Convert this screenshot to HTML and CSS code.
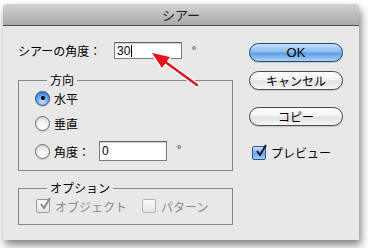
FILE: index.html
```html
<!DOCTYPE html>
<html lang="ja">
<head>
    <meta charset="UTF-8">
    <title>シアー</title>
    <link rel="stylesheet" href="styles.css">
</head>
<body>
    <div class="dialog">
        <div class="titlebar">シアー</div>

        <div class="content">
            <div class="main">
                <div class="angle-row">
                    <span class="lbl">シアーの角度：</span>
                    <span class="field">30<span class="caret"></span></span>
                    <span class="deg">°</span>
                </div>

                <fieldset class="group dir">
                    <legend>方向</legend>
                    <div class="opt-row r1"><span class="radio on"></span>水平</div>
                    <div class="opt-row r2"><span class="radio"></span>垂直</div>
                    <div class="opt-row r3">
                        <span class="radio"></span>
                        <span class="lbl2">角度：</span>
                        <span class="field small">0</span>
                        <span class="deg small-deg">°</span>
                    </div>
                </fieldset>

                <fieldset class="group options">
                    <legend>オプション</legend>
                    <div class="check-row">
                        <span class="check checked"><svg viewBox="0 0 14 14"><path d="M3 7 L6 11 L12 1" /></svg></span>
                        <span class="dis">オブジェクト</span>
                        <span class="check second"></span>
                        <span class="dis">パターン</span>
                    </div>
                </fieldset>
            </div>

            <div class="side">
                <div class="btn ok">OK</div>
                <div class="btn cancel">キャンセル</div>
                <div class="btn copy">コピー</div>
                <div class="preview">
                    <span class="check blue"><svg viewBox="0 0 14 14"><path d="M3 7 L6 11 L12 1" /></svg></span>
                    プレビュー
                </div>
            </div>
        </div>
    </div>

    <!-- red arrow pointing at the angle field -->
    <svg class="arrow" width="368" height="248" viewBox="0 0 368 248">
        <line x1="197" y1="85" x2="164" y2="61" stroke="#fff" stroke-width="5" stroke-linecap="round"/>
        <polygon points="152,53 170,57 162,68" fill="#fff" stroke="#fff" stroke-width="3" stroke-linejoin="round"/>
        <line x1="197" y1="85" x2="164" y2="61" stroke="#e3121b" stroke-width="2.5" stroke-linecap="round"/>
        <polygon points="152,53 170,57 162,68" fill="#e3121b"/>
    </svg>
</body>
</html>
```

FILE: styles.css
```css
body {
    margin: 0;
    background: #fff;
    font-family: "Noto Sans CJK JP", "DejaVu Sans", sans-serif;
    font-size: 12px;
    color: #000;
    width: 368px;
    height: 248px;
    overflow: hidden;
    position: relative;
}

.dialog {
    margin: 4px 0 0 3px;
    width: 356px;
    height: 236px;
    background: #e8e8e8;
    border-radius: 4px 4px 0 0;
    box-shadow: 2px 5px 9px rgba(0, 0, 0, 0.5);
}

.titlebar {
    height: 21px;
    line-height: 21px;
    text-align: center;
    font-size: 13px;
    color: #1e1e1e;
    background: linear-gradient(#d2d2d2, #a9a9a9);
    border-bottom: 1px solid #4e4e4e;
    border-radius: 4px 4px 0 0;
}

.content {
    display: flex;
    padding-left: 15px;
}

.main {
    width: 215px;
}

.angle-row {
    display: flex;
    align-items: center;
    margin-top: 16px;
    height: 17px;
}

.lbl {
    width: 96px;
}

.field {
    display: inline-flex;
    align-items: center;
    box-sizing: border-box;
    width: 68px;
    height: 17px;
    background: #fff;
    border: 1px solid #7d7d7d;
    border-top-color: #5e5e5e;
    box-shadow: inset 0 1px 1px rgba(0, 0, 0, 0.2);
    padding-left: 2px;
    font-family: "Liberation Sans", "DejaVu Sans", sans-serif;
    font-size: 12px;
}

.caret {
    display: inline-block;
    width: 1px;
    height: 12px;
    background: #000;
    margin-left: 1px;
}

.deg {
    align-self: flex-start;
    margin-left: 10px;
    margin-top: 0;
    font-size: 11px;
}

.group {
    margin: 0;
    border: 1px solid #868686;
    padding: 0 0 0 17px;
    box-sizing: border-box;
}

.group legend {
    padding: 0 3px;
    margin-left: 11px;
    line-height: 14px;
    font-size: 12px;
}

.dir {
    margin-top: 14px;
    height: 98px;
}

.opt-row {
    display: flex;
    align-items: center;
    height: 18px;
}

.r1 {
    margin-top: 2px;
}

.r2 {
    margin-top: 7px;
}

.r3 {
    margin-top: 9px;
    height: 20px;
}

.radio {
    width: 15px;
    height: 15px;
    box-sizing: border-box;
    border-radius: 50%;
    border: 1px solid #6e6e6e;
    background: radial-gradient(circle at 50% 72%, #ffffff, #ececec 55%, #c4c4c4);
    box-shadow: 0 1px 1px rgba(0, 0, 0, 0.15);
    margin-left: -1px;
    margin-right: 4px;
    position: relative;
}

.radio.on {
    border-color: #2c4f86;
    background: radial-gradient(circle at 50% 75%, #c2e2ff, #5d9fe8 55%, #2a62b6);
}

.radio.on::after {
    content: "";
    position: absolute;
    left: 4.5px;
    top: 4.5px;
    width: 4px;
    height: 4px;
    border-radius: 50%;
    background: #000;
}

.lbl2 {
    width: 45px;
}

.field.small {
    width: 68px;
    height: 20px;
}

.small-deg {
    margin-left: 10px;
    margin-top: 0;
}

.options {
    margin-top: 10px;
    height: 44px;
}

.check-row {
    display: flex;
    align-items: center;
    height: 14px;
    margin-top: 4px;
}

.check {
    width: 14px;
    height: 14px;
    box-sizing: border-box;
    border: 1px solid #9a9a9a;
    border-radius: 2px;
    background: linear-gradient(#fafafa, #e4e4e4);
    margin-right: 5px;
    position: relative;
}

.check svg {
    position: absolute;
    left: 1px;
    top: -3px;
    width: 14px;
    height: 14px;
}

.check path {
    fill: none;
    stroke: #8c8c8c;
    stroke-width: 2;
}

.check.second {
    margin-left: 15px;
    border-color: #b4b4b4;
}

.dis {
    color: #8a8a8a;
}

.side {
    margin-left: 16px;
    width: 94px;
}

.btn {
    box-sizing: border-box;
    height: 19px;
    line-height: 17px;
    text-align: center;
    border: 1px solid #4a4a4a;
    border-radius: 10px;
    background: linear-gradient(#ffffff, #f4f4f4 45%, #e2e2e2 55%, #f7f7f7);
    box-shadow: 0 1px 1px rgba(0, 0, 0, 0.15);
}

.ok {
    margin-top: 17px;
    border-color: #29446f;
    background: linear-gradient(#c5e0fa, #8cbcef 45%, #5d9ce6 55%, #a9d4fb);
    font-family: "Liberation Sans", "DejaVu Sans", sans-serif;
    font-size: 13px;
}

.cancel {
    margin-top: 9px;
}

.copy {
    margin-top: 17px;
}

.preview {
    display: flex;
    align-items: center;
    margin-top: 18px;
    padding-left: 3px;
}

.check.blue {
    border-color: #32558a;
    background: linear-gradient(#c6e1fb, #6ea8ea 55%, #9fd0fb);
}

.check.blue path {
    stroke: #0a1a3a;
}

.arrow {
    position: absolute;
    left: 0;
    top: 0;
}
```
